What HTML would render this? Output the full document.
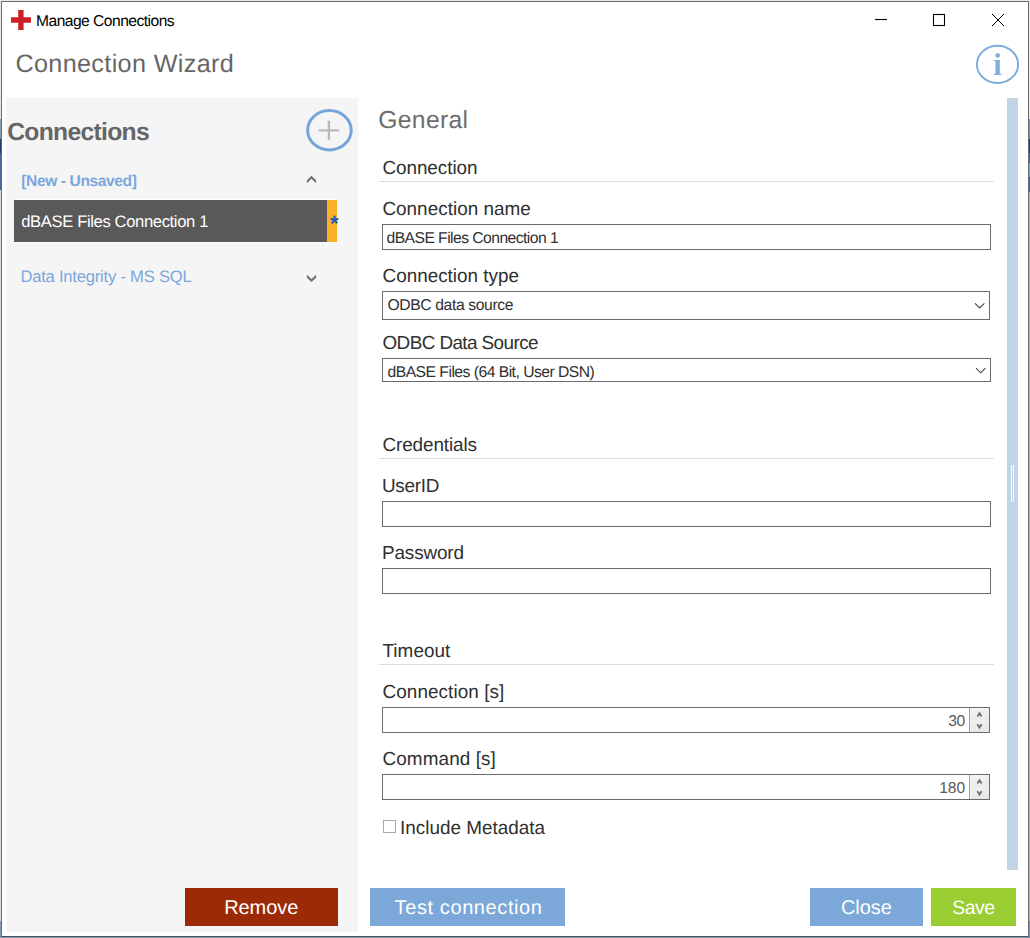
<!DOCTYPE html>
<html lang="en">
<head>
<meta charset="utf-8">
<title>Manage Connections</title>
<style>
html,body{margin:0;padding:0}
body{width:1030px;height:938px;overflow:hidden;position:relative;background:#e9e9e9;font-family:"Liberation Sans",sans-serif}
.abs,.t,.box,.btn,.line{position:absolute}
.t{white-space:nowrap;line-height:1;text-rendering:geometricPrecision}
#desk-l{left:0;top:0;width:1px;height:938px;background:linear-gradient(#e6e6e6 0,#e6e6e6 119px,#8b9bb3 119px,#8b9bb3 139px,#1b3a6b 139px,#1b3a6b 153px,#47679a 153px,#47679a 190px,#d8d8d8 190px,#d8d8d8 921px,#8497ad 921px)}
#desk-r{left:1029px;top:0;width:1px;height:938px;background:linear-gradient(#ececec 0,#ececec 119px,#8592a8 119px,#8592a8 139px,#1b3a6b 139px,#1b3a6b 153px,#47679a 153px,#47679a 163px,#7ba8d2 163px,#7ba8d2 177px,#47679a 177px,#47679a 192px,#b0b0b0 192px,#b0b0b0 921px,#8497ad 921px)}
#desk-b{left:0;top:937px;width:1030px;height:1px;background:#8497ad}
#win{left:1px;top:1px;width:1026px;height:934px;border:1px solid #6c6c6c;border-bottom-color:#4b545d;background:#fff}
#side{left:6px;top:98px;width:352px;height:834px;background:#f5f5f5}
#selrow{left:14px;top:199px;width:323px;height:42px;border-top:1px solid #fff;border-bottom:1px solid #fff;background:linear-gradient(90deg,#595959 0,#595959 313px,#fcb026 313px)}
.line{left:379px;width:615px;height:1px;background:#dcdcdc}
.box{box-sizing:border-box;border:1px solid #6a6a6a;background:#fff;left:382px}
.spin{position:absolute;right:0;top:0;width:20px;height:100%;border-left:1px solid #9a9a9a;background:linear-gradient(#f2f2f2 0,#eaeaea 49%,#f0f0f0 51%,#e7e7e7 100%);box-shadow:inset 1px 1px 0 0 #f8f8f8;box-sizing:border-box}
.spin svg{position:absolute;left:0;top:0}
.btn{top:888px;height:38px}
#sb{left:1007px;top:98px;width:11px;height:772px;background:#c3d3e6}
#sb i{position:absolute;top:367px;width:1px;height:37px;background:#fff}
#chk{left:383px;top:820px;width:11px;height:11px;border:1px solid #a9a9a9;background:#fff}
</style>
</head>
<body>
<div class="abs" id="desk-l"></div><div class="abs" id="desk-r"></div><div class="abs" id="desk-b"></div>
<div class="abs" id="win"></div>

<!-- title bar -->
<svg class="abs" style="left:8px;top:8px" width="28" height="26" viewBox="8 8 28 26"><path d="M18.2 10h5.4v7.3H31v5.4h-7.4V30h-5.4v-7.3H11v-5.4h7.2z" fill="#cc2027"/></svg>
<span class="t title" style="left:36.00px;top:14.00px;font-size:15.6px;letter-spacing:-0.516px;color:#000">Manage Connections</span>
<svg class="abs" style="left:860px;top:4px" width="160" height="32" viewBox="860 4 160 32" fill="none" stroke="#000" stroke-width="1.1">
<path d="M875 19.5h12"/>
<rect x="933.5" y="14.5" width="11" height="11"/>
<path d="M992 14l12 12M1004 14l-12 12" stroke-width="1"/>
</svg>

<!-- header -->
<span class="t h1" style="left:15.40px;top:52.00px;font-size:25.2px;letter-spacing:0.351px;color:#666">Connection Wizard</span>
<svg class="abs" style="left:972px;top:42px;filter:blur(.35px)" width="52" height="46" viewBox="972 42 52 46"><ellipse cx="997.5" cy="64.4" rx="20.6" ry="18.6" fill="none" stroke="#7cabdf" stroke-width="1.9"/><text x="997.6" y="75.2" text-anchor="middle" font-family="Liberation Serif, serif" font-weight="bold" font-size="31" fill="#82afe1">i</text></svg>

<!-- left panel -->
<div class="abs" id="side"></div>
<span class="t h2" style="left:7.20px;top:121.00px;font-size:24.7px;letter-spacing:-0.697px;color:#666;font-weight:bold">Connections</span>
<svg class="abs" style="left:304px;top:105px;filter:blur(.45px)" width="52" height="52" viewBox="304 105 52 52" fill="none"><ellipse cx="329.4" cy="130.2" rx="21.8" ry="19.7" stroke="#76a5da" stroke-width="3"/><path d="M318.6 130.4h20.6M328.9 120.8v19" stroke="#b9b9b9" stroke-width="2.3"/></svg>
<span class="t grp" style="left:21.30px;top:174.00px;font-size:15.6px;letter-spacing:-0.408px;color:#7ba7dc;font-weight:bold">[New - Unsaved]</span>
<svg class="abs" style="left:304px;top:172px" width="16" height="14" viewBox="304 172 16 14"><path d="M311.5 175.8l4.6 4.4v3l-4.6-4.4-4.6 4.4v-3z" fill="#707070"/></svg>
<div class="abs" id="selrow"></div>
<span class="t sel" style="left:21.20px;top:214.00px;font-size:16.6px;letter-spacing:-0.362px;color:#fff">dBASE Files Connection 1</span>
<span class="t" style="left:330.1px;top:213.4px;font-size:22px;font-weight:bold;color:#1a5bb5">*</span>
<span class="t grp2" style="left:20.40px;top:269.00px;font-size:16.6px;letter-spacing:-0.219px;color:#7ba7dc">Data Integrity - MS SQL</span>
<svg class="abs" style="left:304px;top:270px" width="16" height="14" viewBox="304 270 16 14"><path d="M311.5 282.1l4.6-4.4v-3l-4.6 4.4-4.6-4.4v3z" fill="#707070"/></svg>

<!-- form -->
<span class="t h3" style="left:378.20px;top:109.00px;font-size:24.7px;letter-spacing:0.343px;color:#6e6e6e">General</span>
<span class="t sec" style="left:382.40px;top:160.00px;font-size:18.9px;letter-spacing:-0.051px;color:#303030">Connection</span><div class="line" style="top:181px"></div>
<span class="t lbl" style="left:382.40px;top:201.00px;font-size:18.9px;letter-spacing:0.024px;color:#303030">Connection name</span><div class="box" style="top:224px;width:609px;height:26px"></div><span class="t val" style="left:386.50px;top:231.00px;font-size:15.7px;letter-spacing:-0.554px;color:#303030">dBASE Files Connection 1</span>
<span class="t lbl" style="left:382.50px;top:268.00px;font-size:18.9px;letter-spacing:-0.001px;color:#303030">Connection type</span><div class="box" style="top:291px;width:608px;height:29px"></div><span class="t val" style="left:387.40px;top:298.00px;font-size:15.7px;letter-spacing:-0.369px;color:#303030">ODBC data source</span>
<svg class="abs" style="left:972px;top:300px" width="16" height="12" viewBox="972 300 16 12" fill="none" stroke="#444" stroke-width="1.1"><path d="M975 303.3l4.7 4.6 4.7-4.6"/></svg>
<span class="t lbl" style="left:382.50px;top:335.00px;font-size:18.9px;letter-spacing:-0.588px;color:#303030">ODBC Data Source</span><div class="box" style="top:358px;width:609px;height:24px"></div><span class="t val" style="left:387.50px;top:365.00px;font-size:15.7px;letter-spacing:-0.516px;color:#303030">dBASE Files (64 Bit, User DSN)</span>
<svg class="abs" style="left:973px;top:365px" width="16" height="12" viewBox="973 365 16 12" fill="none" stroke="#444" stroke-width="1.1"><path d="M976 368.2l4.7 4.6 4.7-4.6"/></svg>

<span class="t sec" style="left:382.50px;top:437.00px;font-size:18.9px;letter-spacing:-0.111px;color:#303030">Credentials</span><div class="line" style="top:458px"></div>
<span class="t lbl" style="left:382.00px;top:478.00px;font-size:18.9px;letter-spacing:-0.287px;color:#303030">UserID</span><div class="box" style="top:501px;width:609px;height:26px"></div>
<span class="t lbl" style="left:382.00px;top:545.00px;font-size:18.9px;letter-spacing:-0.134px;color:#303030">Password</span><div class="box" style="top:568px;width:609px;height:26px"></div>

<span class="t sec" style="left:382.50px;top:643.00px;font-size:18.9px;letter-spacing:0.035px;color:#303030">Timeout</span><div class="line" style="top:664px"></div>
<span class="t lbl" style="left:382.50px;top:684.00px;font-size:18.9px;letter-spacing:0.076px;color:#303030">Connection [s]</span><div class="box" style="top:707px;width:608px;height:26px"><div class="spin"><svg width="19" height="24" viewBox="0 0 19 24" fill="none" stroke="#6e6e6e" stroke-width="1.8"><path d="M7.4 8.6l2.1-3.3 2.1 3.3M7.4 16.3l2.1 3.3 2.1-3.3"/></svg></div></div><span class="t num" style="left:948.30px;top:714.00px;font-size:15.7px;letter-spacing:-0.625px;color:#5a5a5a">30</span>
<span class="t lbl" style="left:382.50px;top:751.00px;font-size:18.9px;letter-spacing:0.102px;color:#303030">Command [s]</span><div class="box" style="top:774px;width:608px;height:26px"><div class="spin"><svg width="19" height="24" viewBox="0 0 19 24" fill="none" stroke="#6e6e6e" stroke-width="1.8"><path d="M7.4 8.6l2.1-3.3 2.1 3.3M7.4 16.3l2.1 3.3 2.1-3.3"/></svg></div></div><span class="t num" style="left:939.20px;top:781.00px;font-size:15.7px;letter-spacing:-0.125px;color:#5a5a5a">180</span>
<div class="abs" id="chk"></div><span class="t lbl" style="left:400.10px;top:820.00px;font-size:18.9px;letter-spacing:-0.008px;color:#303030">Include Metadata</span>

<!-- scrollbar -->
<div class="abs" id="sb"><i style="left:4px"></i><i style="left:6px"></i></div>

<!-- buttons -->
<div class="btn" style="left:185px;width:153px;background:#9c2a07"></div><span class="t btxt" style="left:224.20px;top:898.00px;font-size:20px;letter-spacing:-0.070px;color:#fff">Remove</span>
<div class="btn" style="left:370px;width:195px;background:#7ba7d9"></div><span class="t btxt" style="left:394.60px;top:898.00px;font-size:20px;letter-spacing:0.596px;color:#fff">Test connection</span>
<div class="btn" style="left:810px;width:113px;background:#7ba7d9"></div><span class="t btxt" style="left:840.90px;top:898.00px;font-size:20px;letter-spacing:-0.052px;color:#fff">Close</span>
<div class="btn" style="left:931px;width:85px;background:#9acd32"></div><span class="t btxt" style="left:952.30px;top:899.00px;font-size:19.4px;letter-spacing:-0.471px;color:#fff">Save</span>
</body>
</html>
